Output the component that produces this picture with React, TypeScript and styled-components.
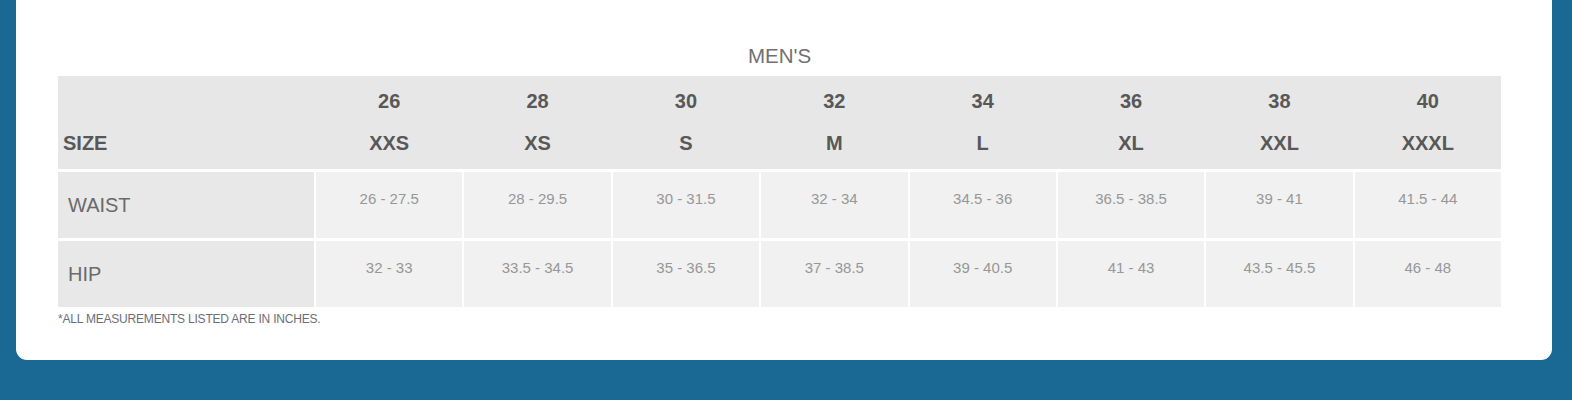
import styled, { createGlobalStyle } from "styled-components";

const sizes = [
  { num: "26", label: "XXS", waist: "26 - 27.5", hip: "32 - 33" },
  { num: "28", label: "XS", waist: "28 - 29.5", hip: "33.5 - 34.5" },
  { num: "30", label: "S", waist: "30 - 31.5", hip: "35 - 36.5" },
  { num: "32", label: "M", waist: "32 - 34", hip: "37 - 38.5" },
  { num: "34", label: "L", waist: "34.5 - 36", hip: "39 - 40.5" },
  { num: "36", label: "XL", waist: "36.5 - 38.5", hip: "41 - 43" },
  { num: "38", label: "XXL", waist: "39 - 41", hip: "43.5 - 45.5" },
  { num: "40", label: "XXXL", waist: "41.5 - 44", hip: "46 - 48" },
];

const rows: { name: string; key: "waist" | "hip" }[] = [
  { name: "WAIST", key: "waist" },
  { name: "HIP", key: "hip" },
];

export default function App() {
  return (
    <Page>
      <GlobalStyle />
      <Card>
        <Title>MEN'S</Title>
        <Chart>
          <Header>
            <HeadLabel>SIZE</HeadLabel>
            {sizes.map((s) => (
              <HeadCell key={s.num}>
                {s.num}
                <br />
                {s.label}
              </HeadCell>
            ))}
          </Header>
          {rows.map((r) => (
            <Row key={r.key}>
              <RowLabel>{r.name}</RowLabel>
              {sizes.map((s) => (
                <Cell key={s.num}>{s[r.key]}</Cell>
              ))}
            </Row>
          ))}
        </Chart>
        <Note>*ALL MEASUREMENTS LISTED ARE IN INCHES.</Note>
      </Card>
    </Page>
  );
}

const GlobalStyle = createGlobalStyle`
  body {
    margin: 0;
    background: #1a6894;
    font-family: "Liberation Sans", Arial, sans-serif;
  }
`;

const Page = styled.div`
  height: 400px;
  padding: 0 20px 0 16px;
  box-sizing: border-box;
`;

const Card = styled.div`
  background: #fff;
  border-radius: 0 0 11px 11px;
  padding: 44px 51px 35px 42px;
  height: 360px;
  box-sizing: border-box;
`;

const Title = styled.div`
  text-align: center;
  font-size: 20.5px;
  line-height: 23px;
  color: #707070;
  margin-bottom: 9px;
`;

const Chart = styled.div`
  display: flex;
  flex-direction: column;
  gap: 3px;
`;

const columns = `
  display: grid;
  grid-template-columns: 256px repeat(8, 1fr);
  column-gap: 2px;
`;

const Header = styled.div`
  ${columns}
  background: #e7e7e7;
  padding: 4px 0 5px;
  font-weight: bold;
  font-size: 20px;
  line-height: 42px;
  color: #585858;
`;

const HeadLabel = styled.div`
  align-self: end;
  padding-left: 5px;
`;

const HeadCell = styled.div`
  text-align: center;
`;

const Row = styled.div`
  ${columns}
  height: 66px;
`;

const RowLabel = styled.div`
  background: #e8e8e8;
  display: flex;
  align-items: center;
  padding-left: 10px;
  font-size: 20px;
  color: #6a6a6a;
`;

const Cell = styled.div`
  background: #f1f1f1;
  text-align: center;
  padding-top: 18px;
  font-size: 15px;
  color: #979797;
`;

const Note = styled.div`
  margin-top: 5px;
  font-size: 12px;
  letter-spacing: -0.2px;
  color: #6b6e78;
`;
